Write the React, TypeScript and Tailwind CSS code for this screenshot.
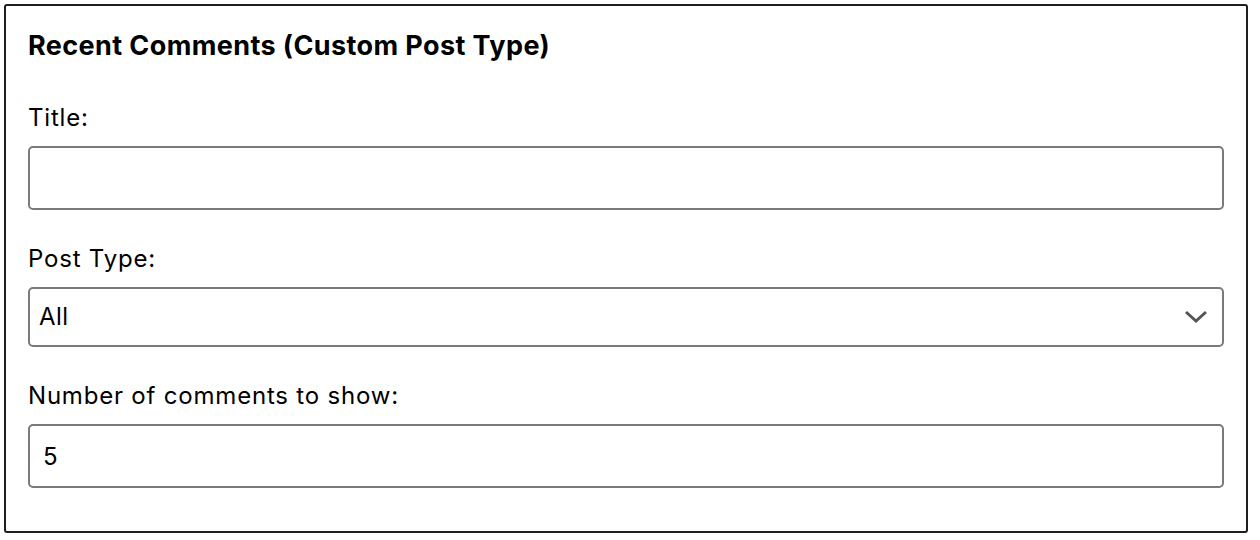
import React from "react";

export default function App() {
  return (
    <div className="w-[1260px] h-[540px] bg-white pt-[4px] pl-[4px]" style={{ fontFamily: "Inter, 'Noto Sans', sans-serif" }}>
      <div className="w-[1244px] h-[529px] border-2 border-[#1e1e1e] rounded-[3px] px-[22px] pt-[24px] text-[#1e1e1e]">
        <h2 className="text-[27px] leading-[32px] font-bold tracking-[0.4px] text-black">Recent Comments (Custom Post Type)</h2>
        <div className="mt-[40px] text-[24px] leading-[32px] tracking-[0.8px] text-black">Title:</div>
        <input
          type="text"
          defaultValue=""
          className="mt-[12px] block w-full h-[64px] border-2 border-[#7a7a7a] rounded-[5px] px-[13px] text-[24px] outline-none bg-white"
        />
        <div className="mt-[33px] text-[24px] leading-[32px] tracking-[0.8px] text-black">Post Type:</div>
        <div className="mt-[12px] relative w-full h-[60px] border-2 border-[#7a7a7a] rounded-[5px] pl-[9px] flex items-center text-[24px] tracking-[0.5px] text-black">
          <span>All</span>
          <svg className="absolute right-[14px] top-1/2 -translate-y-1/2" width="24" height="14" viewBox="0 0 24 14" fill="none">
            <path d="M2 2 L12 11 L22 2" stroke="#555" strokeWidth="3" />
          </svg>
        </div>
        <div className="mt-[33px] text-[24px] leading-[32px] tracking-[0.8px] text-black">Number of comments to show:</div>
        <input
          type="text"
          defaultValue="5"
          className="mt-[12px] block w-full h-[64px] border-2 border-[#7a7a7a] rounded-[5px] px-[13px] text-[24px] text-black outline-none bg-white"
        />
      </div>
    </div>
  );
}
